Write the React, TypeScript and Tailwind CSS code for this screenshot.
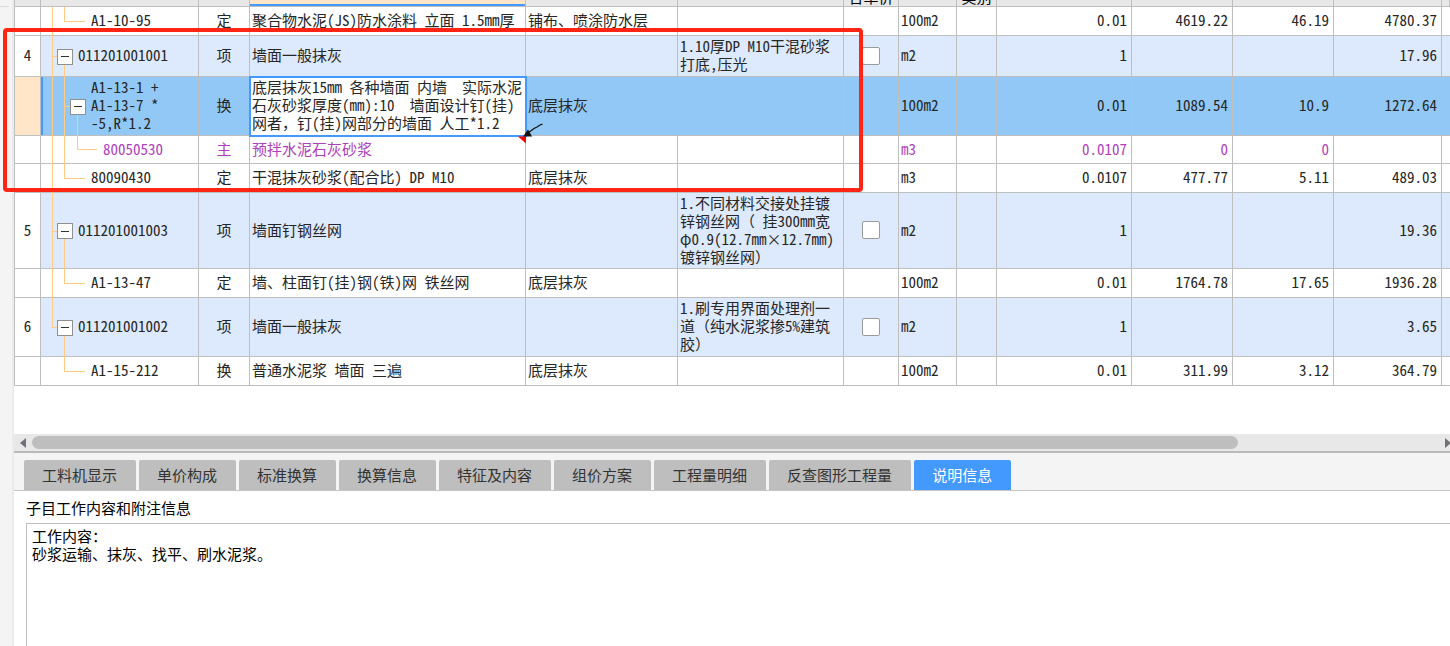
import { useState } from 'react';
import clsx from 'clsx';

type Row = {
  no?: string;
  code: string;
  level: 'item' | 'group' | 'leaf' | 'sub';
  last?: boolean;
  type: string;
  name: string;
  part?: string;
  feature?: string;
  unit: string;
  qty: string;
  price?: string;
  total?: string;
  full?: string;
  height: string;
};

const rows: Row[] = [
  { code: 'A1-10-95', level: 'leaf', type: '定', name: '聚合物水泥(JS)防水涂料 立面 1.5mm厚', part: '铺布、喷涂防水层', unit: '100m2', qty: '0.01', price: '4619.22', total: '46.19', full: '4780.37', height: 'h-[29px]' },
  { no: '4', code: '011201001001', level: 'item', type: '项', name: '墙面一般抹灰', feature: '1.10厚DP M10干混砂浆\n打底,压光', unit: 'm2', qty: '1', full: '17.96', height: 'h-[41px]' },
  { code: 'A1-13-1 +\nA1-13-7 *\n-5,R*1.2', level: 'group', type: '换', name: '底层抹灰15mm 各种墙面 内墙  实际水泥\n石灰砂浆厚度(mm):10  墙面设计钉(挂)\n网者，钉(挂)网部分的墙面 人工*1.2', part: '底层抹灰', unit: '100m2', qty: '0.01', price: '1089.54', total: '10.9', full: '1272.64', height: 'h-[59px]' },
  { code: '80050530', level: 'sub', type: '主', name: '预拌水泥石灰砂浆', unit: 'm3', qty: '0.0107', price: '0', total: '0', height: 'h-[28px]' },
  { code: '80090430', level: 'leaf', type: '定', name: '干混抹灰砂浆(配合比) DP M10', part: '底层抹灰', unit: 'm3', qty: '0.0107', price: '477.77', total: '5.11', full: '489.03', height: 'h-[29px]' },
  { no: '5', code: '011201001003', level: 'item', type: '项', name: '墙面钉钢丝网', feature: '1.不同材料交接处挂镀\n锌钢丝网（ 挂300mm宽\nφ0.9(12.7mm×12.7mm)\n镀锌钢丝网）', unit: 'm2', qty: '1', full: '19.36', height: 'h-[76px]' },
  { code: 'A1-13-47', level: 'leaf', type: '定', name: '墙、柱面钉(挂)钢(铁)网 铁丝网', part: '底层抹灰', unit: '100m2', qty: '0.01', price: '1764.78', total: '17.65', full: '1936.28', height: 'h-[29px]' },
  { no: '6', code: '011201001002', level: 'item', last: true, type: '项', name: '墙面一般抹灰', feature: '1.刷专用界面处理剂一\n道（纯水泥浆掺5%建筑\n胶）', unit: 'm2', qty: '1', full: '3.65', height: 'h-[59px]' },
  { code: 'A1-15-212', level: 'leaf', last: true, type: '换', name: '普通水泥浆 墙面 三遍', part: '底层抹灰', unit: '100m2', qty: '0.01', price: '311.99', total: '3.12', full: '364.79', height: 'h-[29px]' },
];

const tabs = ['工料机显示', '单价构成', '标准换算', '换算信息', '特征及内容', '组价方案', '工程量明细', '反查图形工程量', '说明信息'];

const cell = 'border-r border-b border-[#bfbfbf] pb-[2px]';

// vertical connector, optionally with a branch to the right and a lower half
function Guide({ className, branch, down }: { className: string; branch?: boolean; down?: boolean }) {
  return (
    <div className={clsx('flex shrink-0 flex-col', down && '-mb-px', className)}>
      <div className={clsx('flex-1 border-l border-[#ffcb85]', branch && 'border-b')} />
      <div className={clsx('flex-1', down && 'border-l border-[#ffcb85]')} />
    </div>
  );
}

function Toggle() {
  return (
    <div className="-mb-px flex w-4 shrink-0 flex-col">
      <div className="flex-1" />
      <button type="button" aria-label="折叠" className="flex size-4 items-center justify-center border border-[#8f8f8f] bg-white">
        <span className="h-px w-2 bg-[#333]" />
      </button>
      <div className="ml-[7px] flex-1 border-l border-[#ffcb85]" />
    </div>
  );
}

function TreeCell({ row }: { row: Row }) {
  const { level, last } = row;
  return (
    <div className="flex h-full">
      {level === 'item' && (
        <>
          <Guide className="ml-[11px] w-[5px]" branch down={!last} />
          <Toggle />
        </>
      )}
      {level !== 'item' && (last ? <div className="w-4 shrink-0" /> : <Guide className="ml-[11px] w-[5px]" down />)}
      {level === 'leaf' && <Guide className="ml-[7px] w-[21px]" branch />}
      {level === 'group' && (
        <>
          <Guide className="ml-[7px] w-[6px]" branch down />
          <Toggle />
        </>
      )}
      {level === 'sub' && (
        <>
          <Guide className="ml-[7px] w-[6px]" down />
          <Guide className="ml-[7px] w-[20px]" branch />
        </>
      )}
      <div className={clsx('self-center whitespace-pre pb-[2px]', level === 'leaf' || level === 'sub' ? 'pl-[6px]' : 'pl-[5px]')}>
        {row.code}
      </div>
    </div>
  );
}

function GridRow({ row }: { row: Row }) {
  const selected = row.level === 'group';
  const isItem = row.level === 'item';
  return (
    <tr
      className={clsx(
        row.height,
        isItem && 'bg-[#dde9fd]',
        selected && 'bg-[#92c8f6]',
        row.level === 'sub' ? 'text-[#ae3fbd]' : 'text-[#262626]'
      )}
    >
      <td className={clsx(cell, 'text-center', selected ? 'bg-[#ffe6c8]' : 'bg-white')}>{row.no}</td>
      <td className={clsx('h-px border-r border-b border-[#bfbfbf]', selected && 'shadow-[inset_2px_0_0_#4499ff]')}>
        <TreeCell row={row} />
      </td>
      <td className={clsx(cell, 'text-center')}>{row.type}</td>
      <td className={clsx(cell, 'whitespace-pre pl-[2px]', selected && 'bg-white outline-2 -outline-offset-1 outline-[#4499ff]')}>
        {row.name}
      </td>
      <td className={clsx(cell, 'whitespace-pre pl-[2px]')}>{row.part}</td>
      <td className={clsx(cell, 'whitespace-pre pl-[2px]')}>{row.feature}</td>
      <td className={clsx(cell, 'text-center')}>
        {isItem && (
          <input
            type="checkbox"
            aria-label={'锁定综合单价 ' + row.code}
            className="size-[18px] appearance-none rounded-xs border border-[#9a9a9a] bg-white align-middle checked:bg-[#4499ff]"
          />
        )}
      </td>
      <td className={clsx(cell, 'pl-[2px]')}>{row.unit}</td>
      <td className={cell} />
      <td className={clsx(cell, 'pr-1 text-right')}>{row.qty}</td>
      <td className={clsx(cell, 'pr-1 text-right')}>{row.price}</td>
      <td className={clsx(cell, 'pr-1 text-right')}>{row.total}</td>
      <td className={clsx(cell, 'pr-1 text-right')}>{row.full}</td>
      <td className="border-b border-[#bfbfbf]" />
    </tr>
  );
}

function HeadCell({ label, active }: { label?: string; active?: boolean }) {
  return (
    <th className={clsx('border-r border-b border-[#bfbfbf] font-normal', active ? 'bg-[#ffe6c8] shadow-[inset_0_-2px_0_#4499ff]' : 'bg-[#e8e8e8]')}>
      <div className="flex h-[6px] items-end justify-center overflow-hidden whitespace-nowrap">{label}</div>
    </th>
  );
}

function BudgetGrid() {
  return (
    <div className="relative">
      <table className="w-full table-fixed border-separate border-spacing-0 border-l border-[#bfbfbf]">
        <colgroup>
          <col className="w-[26px]" />
          <col className="w-[158px]" />
          <col className="w-[51px]" />
          <col className="w-[276px]" />
          <col className="w-[152px]" />
          <col className="w-[166px]" />
          <col className="w-[55px]" />
          <col className="w-[58px]" />
          <col className="w-[40px]" />
          <col className="w-[135px]" />
          <col className="w-[101px]" />
          <col className="w-[101px]" />
          <col className="w-[108px]" />
          <col />
        </colgroup>
        <thead>
          <tr>
            <HeadCell />
            <HeadCell />
            <HeadCell />
            <HeadCell active />
            <HeadCell />
            <HeadCell />
            <HeadCell label="合单价" />
            <HeadCell />
            <HeadCell label="类别" />
            <HeadCell />
            <HeadCell />
            <HeadCell />
            <HeadCell />
            <HeadCell />
          </tr>
        </thead>
        <tbody>
          {rows.map((row) => (
            <GridRow key={row.code} row={row} />
          ))}
        </tbody>
      </table>

      {/* red callout drawn over the grid */}
      <div className="pointer-events-none absolute -left-[11px] top-7 h-[164px] w-[860px] rounded-sm border-4 border-[#ff2413]" />
      {/* note marker and pointer at the corner of the edited cell */}
      <svg className="pointer-events-none absolute left-[502px] top-[122px]" width="30" height="24" viewBox="0 0 30 24">
        <path d="M2 14.500H10V21.500Z" fill="#ff0000" />
        <path d="M26.500 2.200L24 3L21 5L18 6.500L12 11" stroke="#111" strokeWidth="1.3" fill="none" />
        <path d="M7 14.500L12 7.500L13.500 10L16 14.500Z" fill="#111" />
      </svg>
    </div>
  );
}

function ScrollStrip() {
  return (
    <div className="flex h-[17px] items-center bg-[#e8e8e8]">
      <button type="button" aria-label="向左滚动" className="flex w-[18px] shrink-0 justify-center">
        <svg width="6" height="10" viewBox="0 0 6 10">
          <path d="M6 0V10L0 5Z" fill="#6f7078" />
        </svg>
      </button>
      <div className="flex flex-1">
        <div className="h-[13px] flex-[35] rounded-full bg-[#bebebe]" />
        <div className="flex-[6]" />
      </div>
      <button type="button" aria-label="向右滚动" className="shrink-0">
        <svg width="5" height="10" viewBox="0 0 5 10">
          <path d="M0 0V10L6 5Z" fill="#6f7078" />
        </svg>
      </button>
    </div>
  );
}

export default function App() {
  const [active, setActive] = useState('说明信息');
  return (
    <div className="flex min-h-screen overflow-hidden bg-white font-['Noto_Sans_Mono_CJK_SC','Liberation_Mono','Noto_Sans_CJK_SC',monospace] text-[15px] leading-[18px]">
      <aside className="w-[14px] shrink-0 border-r-2 border-[#ebebeb] bg-[#f4f4f4] pt-[6px]">
        <div className="h-px w-[9px] bg-[#dcdcdc]" />
      </aside>

      <main className="flex min-w-0 flex-1 flex-col">
        <BudgetGrid />

        <div className="mt-12">
          <ScrollStrip />
        </div>

        <nav className="flex h-10 items-end gap-[3px] border-t-2 border-b border-t-[#bababa] border-b-[#c4c4c4] bg-[#f4f4f4] pl-[10px]">
          {tabs.map((tab) => (
            <button
              key={tab}
              type="button"
              onClick={() => setActive(tab)}
              className={clsx(
                'h-[30px] shrink-0 rounded-t-xs px-[18px] pr-[19px] font-["Noto_Sans_CJK_SC",sans-serif]',
                tab === active ? 'bg-[#4499ff] text-white' : 'bg-[#bebebe] text-[#333]'
              )}
            >
              {tab}
            </button>
          ))}
        </nav>

        <section className="flex flex-1 flex-col pl-3 pt-2 text-black">
          <label htmlFor="note">子目工作内容和附注信息</label>
          <textarea
            id="note"
            className="mt-[6px] w-full flex-1 resize-none border-l border-t border-[#bfbfbf] px-[5px] py-[3px] outline-none"
            defaultValue={'工作内容：\n砂浆运输、抹灰、找平、刷水泥浆。'}
          />
        </section>
      </main>
    </div>
  );
}
